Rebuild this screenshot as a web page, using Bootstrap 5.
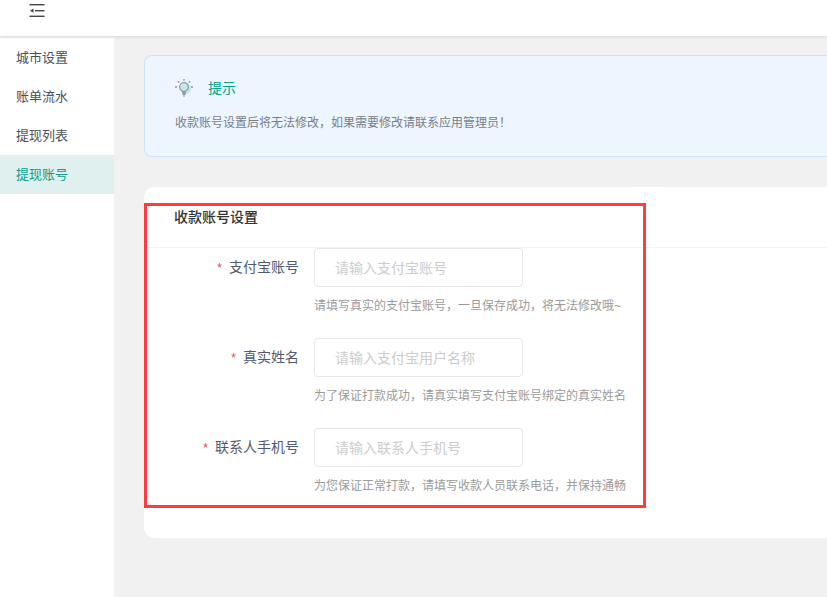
<!DOCTYPE html>
<html lang="zh-CN">
<head>
<meta charset="utf-8">
<title>提现账号</title>
<link href="https://cdn.jsdelivr.net/npm/bootstrap@5.3.0/dist/css/bootstrap.min.css" rel="stylesheet">
<style>
html,body{height:597px;overflow:hidden}
body{font-family:"Liberation Sans","Noto Sans CJK SC",sans-serif;background:#f1f1f1;font-size:13px;color:#333}
.shell{width:827px;height:597px;overflow:hidden}
.topbar{height:36px;background:#fff;box-shadow:0 1px 3px rgba(0,0,0,.1);position:relative;z-index:2;padding-left:29px;flex:none}
.topbar svg{display:block;margin-top:4px}
.body-row{height:561px;padding-top:2px}
.sidemenu{width:114px;flex:none;background:#fff}
.sidemenu a{display:block;height:39px;line-height:40px;padding-left:16px;color:#4a4f5c;font-size:13px;text-decoration:none}
.sidemenu a.on{background:#dff0ee;color:#0c9c8c}
.main-area{width:713px;flex:none;padding:17px 0 0 30px}
.tip-box{width:720px;height:102px;background:#edf5ff;border:1px solid #cfe2fa;border-right:0;border-radius:8px 0 0 8px;padding:21px 0 0 29px}
.tip-head{height:22px;gap:14px}
.tip-title{font-size:14px;color:#00a08a}
.tip-text{margin-top:15px;font-size:12px;color:#777e8a;line-height:18px;margin-left:1px}
.form-card{position:relative;width:700px;height:351px;margin-top:30px;background:#fff;border-radius:10px 0 0 10px}
.form-head{height:61px;padding:21px 0 0 30px;border-bottom:1px solid #f2f2f2;font-size:14px;font-weight:500;color:#333;line-height:18px}
.field-row{height:90px}
.field-label{width:170px;height:40px;line-height:38px;text-align:right;font-size:14px;color:#515a6e;padding-right:15px;flex:none}
.field-label i{font-style:normal;color:#e8414a;margin-right:7px;font-size:12px}
.field-input.form-control{width:209px;height:39px;border:1px solid #e6e6e6;border-radius:4px;padding:0 20px;font-size:14px;color:#333;box-shadow:none;background:#fff}
.field-input::placeholder{color:#ccc;opacity:1}
.field-hint{margin-top:10px;font-size:12px;line-height:18px;color:#9a9a9a;white-space:nowrap}
.red-frame{position:absolute;left:0;top:16px;width:502px;height:305px;border:3px solid #ff3b3b;pointer-events:none}
</style>
</head>
<body>
<div class="shell d-flex flex-column">
  <div class="topbar">
    <svg width="16" height="14" viewBox="0 0 16 14" fill="#444" aria-hidden="true">
      <rect x="0.500" y="0" width="15" height="1.400"/>
      <rect x="6" y="6" width="9.500" height="1.400"/>
      <rect x="0.500" y="11.600" width="15" height="1.400"/>
      <path d="M1 6.700 4.500 4.600V8.800Z"/>
    </svg>
  </div>
  <div class="body-row d-flex">
    <nav class="sidemenu">
      <a href="#">城市设置</a>
      <a href="#">账单流水</a>
      <a href="#">提现列表</a>
      <a href="#" class="on">提现账号</a>
    </nav>
    <main class="main-area">
      <section class="tip-box">
        <div class="tip-head d-flex align-items-center">
          <svg width="20" height="20" viewBox="0 0 20 20" fill="none" aria-hidden="true">
            <circle cx="11.500" cy="10.500" r="5.500" fill="#c6e8e6"/>
            <circle cx="10" cy="9" r="4.300" stroke="#8f959c" stroke-width="1.200"/>
            <path d="M8 14.500h4M8.500 16.300h3M9.300 18h1.400" stroke="#8f959c" stroke-width="1.400"/>
            <path d="M10 1v1.800M3.900 3.200l1.300 1.300M16.100 3.200l-1.300 1.300M1 9h2M17 9h2" stroke="#8f959c" stroke-width="1.400"/>
          </svg>
          <span class="tip-title">提示</span>
        </div>
        <p class="tip-text mb-0">收款账号设置后将无法修改，如果需要修改请联系应用管理员！</p>
      </section>
      <section class="form-card">
        <div class="form-head">收款账号设置</div>
        <form>
          <div class="field-row d-flex">
            <label class="field-label"><i>*</i>支付宝账号</label>
            <div>
              <input class="form-control field-input" placeholder="请输入支付宝账号">
              <div class="field-hint">请填写真实的支付宝账号，一旦保存成功，将无法修改哦~</div>
            </div>
          </div>
          <div class="field-row d-flex">
            <label class="field-label"><i>*</i>真实姓名</label>
            <div>
              <input class="form-control field-input" placeholder="请输入支付宝用户名称">
              <div class="field-hint">为了保证打款成功，请真实填写支付宝账号绑定的真实姓名</div>
            </div>
          </div>
          <div class="field-row d-flex">
            <label class="field-label"><i>*</i>联系人手机号</label>
            <div>
              <input class="form-control field-input" placeholder="请输入联系人手机号">
              <div class="field-hint">为您保证正常打款，请填写收款人员联系电话，并保持通畅</div>
            </div>
          </div>
        </form>
        <div class="red-frame"></div>
      </section>
    </main>
  </div>
</div>
<script src="https://cdn.jsdelivr.net/npm/bootstrap@5.3.0/dist/js/bootstrap.bundle.min.js"></script>
</body>
</html>
